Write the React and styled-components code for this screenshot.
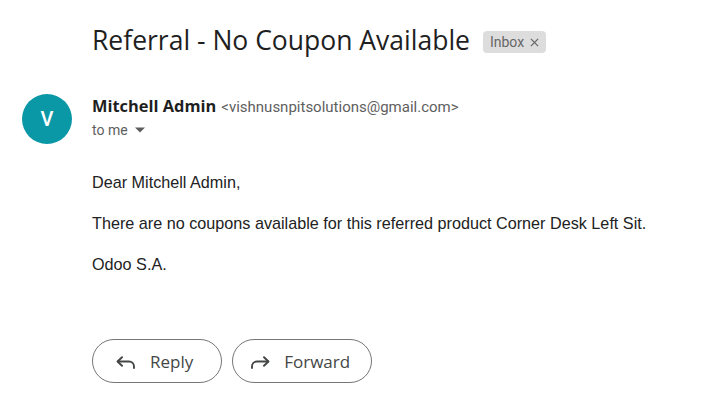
import React from 'react';
import styled, { createGlobalStyle } from 'styled-components';

const GlobalStyle = createGlobalStyle`
  html, body {
    margin: 0;
    background: #ffffff;
  }
`;

const Page = styled.div`
  display: grid;
  grid-template-columns: 50px 1fr;
  align-content: start;
  column-gap: 20px;
  padding: 24px 0 0 22px;
  width: 728px;
  height: 416px;
  box-sizing: border-box;
`;

const Header = styled.div`
  grid-column: 2;
  display: flex;
  align-items: center;
  gap: 13px;
  height: 32px;
`;

const Subject = styled.h1`
  margin: 0;
  font-family: 'Open Sans', sans-serif;
  font-weight: 400;
  font-size: 26.5px;
  color: #1f1f1f;
`;

const Chip = styled.span`
  display: inline-flex;
  align-items: center;
  gap: 6px;
  height: 22px;
  padding: 0 7px;
  border-radius: 4px;
  background: #dddddd;
  font-family: 'Roboto', sans-serif;
  font-size: 14px;
  color: #666666;
  margin-top: 4px;
`;

const Avatar = styled.div`
  grid-column: 1;
  width: 50px;
  height: 50px;
  border-radius: 50%;
  background: #0a97a6;
  color: #ffffff;
  display: flex;
  align-items: center;
  justify-content: center;
  font-family: 'Roboto', sans-serif;
  font-weight: 500;
  font-size: 20px;
  margin-top: 38px;
`;

const Content = styled.div`
  grid-column: 2;
  margin-top: 38px;
`;

const SenderLine = styled.div`
  display: flex;
  align-items: baseline;
  gap: 5px;
  height: 22px;
`;

const Name = styled.span`
  font-family: 'Open Sans', sans-serif;
  font-weight: 700;
  font-size: 16.4px;
  color: #1f1f1f;
`;

const Address = styled.span`
  font-family: 'Roboto', sans-serif;
  font-size: 15px;
  color: #5e5e5e;
`;

const Recipient = styled.div`
  display: flex;
  align-items: center;
  gap: 7px;
  margin-top: 6px;
  font-family: 'Roboto', sans-serif;
  font-size: 14px;
  color: #5e5e5e;
`;

const Body = styled.div`
  margin-top: 34px;
  font-family: 'Liberation Sans', Arial, sans-serif;
  font-size: 16.2px;
  color: #222222;
  line-height: 20px;
`;

const Para = styled.p`
  margin: 0 0 21px;
`;

const Actions = styled.div`
  display: flex;
  gap: 10px;
  margin-top: 65px;
`;

const ActionButton = styled.button`
  display: inline-flex;
  align-items: center;
  gap: 14px;
  height: 44px;
  padding: 0 ${(p) => p.$padRight}px 0 ${(p) => p.$padLeft}px;
  border: 1px solid #747775;
  border-radius: 22px;
  background: #ffffff;
  font-family: 'Open Sans', sans-serif;
  font-size: 17px;
  color: #444746;
  cursor: pointer;
`;

const ArrowIcon = styled.svg`
  transform: ${(p) => (p.$mirror ? 'scaleX(-1)' : 'none')};
  margin-top: 2px;
`;

const TurnArrow = ({ mirror }) => (
  <ArrowIcon $mirror={mirror} width="20" height="13" viewBox="0 0 20 13" fill="none" stroke="#444746" strokeWidth="1.9" strokeLinecap="round" strokeLinejoin="round">
    <path d="M6 1.2 1.6 5.5 6 9.8" />
    <path d="M1.8 5.5H13a5 5 0 0 1 5 5V12" />
  </ArrowIcon>
);

export default function App() {
  return (
    <>
      <GlobalStyle />
      <Page>
        <Header>
          <Subject>Referral - No Coupon Available</Subject>
          <Chip>
            Inbox
            <svg width="9" height="9" viewBox="0 0 10 10" stroke="#666" strokeWidth="1.4">
              <path d="M1 1l8 8M9 1 1 9" />
            </svg>
          </Chip>
        </Header>
        <Avatar>V</Avatar>
        <Content>
          <SenderLine>
            <Name>Mitchell Admin</Name>
            <Address>&lt;vishnusnpitsolutions@gmail.com&gt;</Address>
          </SenderLine>
          <Recipient>
            to me
            <svg width="10" height="6" viewBox="0 0 10 5">
              <path d="M0 0h10L5 5z" fill="#5e5e5e" />
            </svg>
          </Recipient>
          <Body>
            <Para>Dear Mitchell Admin,</Para>
            <Para>There are no coupons available for this referred product Corner Desk Left Sit.</Para>
            <Para>Odoo S.A.</Para>
          </Body>
          <Actions>
            <ActionButton $padLeft={23} $padRight={28}>
              <TurnArrow />
              Reply
            </ActionButton>
            <ActionButton $padLeft={17} $padRight={21}>
              <TurnArrow mirror />
              Forward
            </ActionButton>
          </Actions>
        </Content>
      </Page>
    </>
  );
}
